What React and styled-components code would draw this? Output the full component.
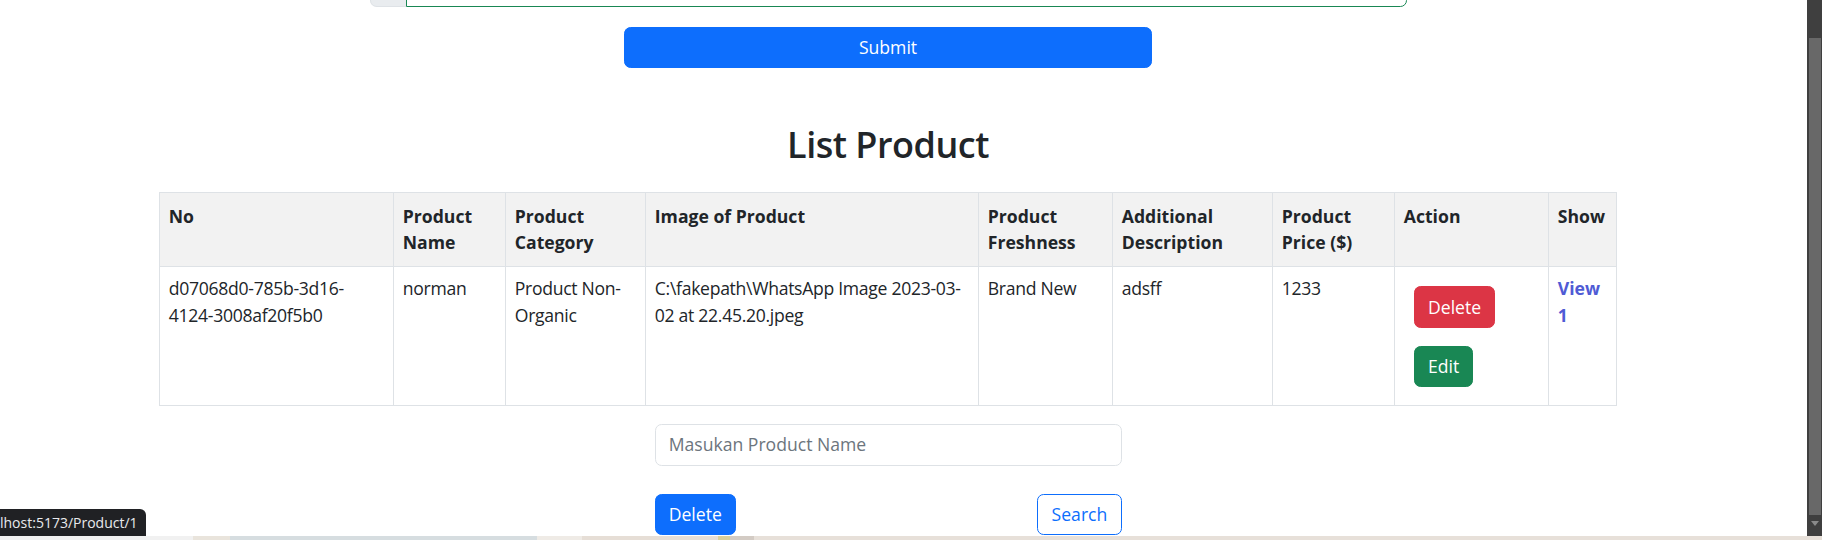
import React from 'react';
import styled, { createGlobalStyle } from 'styled-components';

const GlobalStyle = createGlobalStyle`
  html, body {
    margin: 0;
    padding: 0;
    height: 100%;
    overflow: hidden;
    background: #fff;
  }
  body {
    font-family: "Segoe UI", "Open Sans", "Liberation Sans", sans-serif;
    font-size: 17.6px;
    line-height: 1.5;
    color: #212529;
  }
`;

const Screen = styled.div`
  display: flex;
  flex-direction: column;
  height: 540px;
  overflow: hidden;
`;

const Viewport = styled.div`
  display: flex;
  height: 536px;
  overflow: hidden;
`;

const Main = styled.main`
  flex: 1;
  display: flex;
  flex-direction: column;
  align-items: center;
  padding-right: 31px;
`;

const Scrollbar = styled.div`
  width: 15px;
  background: #3f3f3f;
  display: flex;
  flex-direction: column;
  padding-top: 38px;
  box-sizing: border-box;
`;

const Thumb = styled.div`
  margin: 0 1px 0 2px;
  height: 477px;
  background: #686868;
`;

const Arrow = styled.div`
  margin-top: 6px;
  align-self: center;
  width: 0;
  height: 0;
  border-left: 4px solid transparent;
  border-right: 4px solid transparent;
  border-top: 5px solid #8a8a8a;
`;

const Strip = styled.div`
  display: flex;
  height: 4px;
`;

const StripPart = styled.div`
  flex: ${p => p.$grow};
  background: ${p => p.$color};
`;

const InputGroup = styled.div`
  display: flex;
  width: 1037px;
  height: 42px;
  margin-top: -35px;
`;

const Addon = styled.div`
  width: 36px;
  background: #e9ecef;
  border: 1px solid #dee2e6;
  border-right: none;
  border-radius: 6.6px 0 0 6.6px;
  box-sizing: border-box;
`;

const ValidInput = styled.div`
  flex: 1;
  border: 1px solid #198754;
  border-radius: 0 6.6px 6.6px 0;
`;

const Button = styled.button`
  font-family: inherit;
  font-size: 17.6px;
  line-height: 26.4px;
  padding: 6.6px 13.2px;
  border-radius: 6.6px;
  border: 1px solid ${p => p.$color};
  background: ${p => (p.$outline ? '#fff' : p.$color)};
  color: ${p => (p.$outline ? p.$color : '#fff')};
  cursor: pointer;
  width: ${p => p.$width || 'auto'};
  box-sizing: border-box;
`;

const SubmitButton = styled(Button)`
  margin-top: 20px;
  height: 41px;
  padding-top: 6px;
`;

const Title = styled.h1`
  font-size: 36px;
  font-weight: 600;
  letter-spacing: -0.5px;
  line-height: 1.2;
  margin: 55px 0 26px;
`;

const Table = styled.table`
  border-collapse: collapse;
  width: 1457px;
  table-layout: fixed;
`;

const Th = styled.th`
  box-sizing: border-box;
  background: #f2f2f2;
  border: 1px solid #dee2e6;
  padding: 9.8px 8.8px;
  text-align: left;
  vertical-align: top;
  font-weight: 700;
  width: ${p => p.$w}px;
`;

const Td = styled.td`
  border: 1px solid #dee2e6;
  padding: ${p => (p.$action ? '8.8px 0 8.8px 10px' : '8.8px')};
  vertical-align: top;
  letter-spacing: -0.3px;
`;

const ActionStack = styled.div`
  display: flex;
  flex-direction: column;
  align-items: flex-start;
  gap: 17.6px;
  padding: 11px 8.8px 8.8px;
  letter-spacing: normal;
`;

const ViewLink = styled.a`
  color: #4f5bd5;
  font-weight: 700;
  text-decoration: none;
  letter-spacing: normal;
`;

const SearchInput = styled.div`
  margin-top: 18px;
  width: 467px;
  height: 42px;
  box-sizing: border-box;
  border: 1px solid #dee2e6;
  border-radius: 6.6px;
  padding: 6.6px 13.2px;
  color: #6c757d;
`;

const ButtonRow = styled.div`
  margin-top: 28px;
  width: 467px;
  display: flex;
  justify-content: space-between;
`;

const StatusBubble = styled.div`
  position: fixed;
  left: 0;
  bottom: 4px;
  height: 27px;
  padding: 0 8px 0 0;
  background: #202124;
  color: #e8eaed;
  font-size: 14px;
  line-height: 27px;
  border-radius: 0 6px 0 0;
  white-space: nowrap;
`;

const columns = [
  { label: 'No', w: 234 },
  { label: 'Product Name', w: 112 },
  { label: 'Product Category', w: 140 },
  { label: 'Image of Product', w: 333 },
  { label: 'Product Freshness', w: 134 },
  { label: 'Additional Description', w: 160 },
  { label: 'Product Price ($)', w: 122 },
  { label: 'Action', w: 154 },
  { label: 'Show', w: 68 },
];

const products = [
  {
    id: 'd07068d0-785b-3d16-4124-3008af20f5b0',
    name: 'norman',
    category: 'Product Non-Organic',
    image: 'C:\\fakepath\\WhatsApp Image 2023-03-02 at 22.45.20.jpeg',
    freshness: 'Brand New',
    description: 'adsff',
    price: '1233',
    no: 1,
  },
];

const stripColors = [
  [235, '#f1f1f1'], [45, '#e9e4dc'], [375, '#d6dde0'], [55, '#efebe6'],
  [165, '#e6ded6'], [15, '#d9cf9a'], [30, '#d3cbc4'], [1302, '#e7e0d9'],
];

export default function App() {
  return (
    <Screen>
      <GlobalStyle />
      <Viewport>
        <Main>
          <InputGroup>
            <Addon />
            <ValidInput />
          </InputGroup>
          <SubmitButton $color="#0d6efd" $width="528px">Submit</SubmitButton>

          <Title>List Product</Title>
          <Table>
            <thead>
              <tr>
                {columns.map(c => (
                  <Th key={c.label} $w={c.w}>{c.label}</Th>
                ))}
              </tr>
            </thead>
            <tbody>
              {products.map(p => (
                <tr key={p.id}>
                  <Td>{p.id}</Td>
                  <Td>{p.name}</Td>
                  <Td>{p.category}</Td>
                  <Td>{p.image}</Td>
                  <Td>{p.freshness}</Td>
                  <Td>{p.description}</Td>
                  <Td>{p.price}</Td>
                  <Td $action>
                    <ActionStack>
                      <Button $color="#dc3545">Delete</Button>
                      <Button $color="#198754">Edit</Button>
                    </ActionStack>
                  </Td>
                  <Td>
                    <ViewLink href="#">View {p.no}</ViewLink>
                  </Td>
                </tr>
              ))}
            </tbody>
          </Table>

          <SearchInput>Masukan Product Name</SearchInput>
          <ButtonRow>
            <Button $color="#0d6efd">Delete</Button>
            <Button $color="#0d6efd" $outline>Search</Button>
          </ButtonRow>
        </Main>
        <Scrollbar>
          <Thumb />
          <Arrow />
        </Scrollbar>
      </Viewport>
      <Strip>
        {stripColors.map(([g, c], i) => (
          <StripPart key={i} $grow={g} $color={c} />
        ))}
      </Strip>
      <StatusBubble>lhost:5173/Product/1</StatusBubble>
    </Screen>
  );
}
